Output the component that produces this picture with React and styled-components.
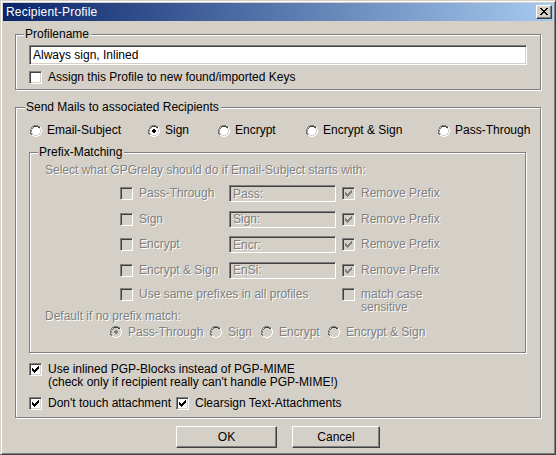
import React from "react";
import styled, { createGlobalStyle } from "styled-components";

const GlobalStyle = createGlobalStyle`
  html, body {
    margin: 0;
    padding: 0;
    background: #d4d0c8;
  }
  * {
    box-sizing: border-box;
  }
`;

const FONT = `"Liberation Sans", Arial, sans-serif`;

const Window = styled.div`
  width: 556px;
  height: 455px;
  background: #d4d0c8;
  border-top: 1px solid #d4d0c8;
  border-left: 1px solid #d4d0c8;
  border-right: 1px solid #404040;
  border-bottom: 1px solid #404040;
  box-shadow: inset 1px 1px 0 #ffffff, inset -1px -1px 0 #808080;
  padding: 2px;
  font-family: ${FONT};
  font-size: 12px;
  color: #000;
  display: flex;
  flex-direction: column;
`;

const TitleBar = styled.div`
  height: 18px;
  background: linear-gradient(to right, #0a246a, #a6caf0);
  display: flex;
  align-items: center;
  justify-content: space-between;
  padding: 0 1px 0 3px;
`;

const Title = styled.span`
  color: #fff;
  font-size: 12px;
  letter-spacing: 0.2px;
`;

const CloseButton = styled.div`
  width: 16px;
  height: 14px;
  background: #d4d0c8;
  border-top: 1px solid #fff;
  border-left: 1px solid #fff;
  border-right: 1px solid #404040;
  border-bottom: 1px solid #404040;
  box-shadow: inset -1px -1px 0 #808080;
  display: flex;
  align-items: center;
  justify-content: center;
  padding-bottom: 1px;
`;

const Body = styled.div`
  display: flex;
  flex-direction: column;
  padding: 13px 11px 0 12px;
`;

const Group = styled.div`
  position: relative;
  border: 1px solid #808080;
  box-shadow: inset 1px 1px 0 #fff, 1px 1px 0 #fff;
  margin-right: 1px;
  margin-bottom: 1px;
  display: flex;
  flex-direction: column;
  padding: ${(p) => p.$pad || "0"};
  height: ${(p) => p.$h}px;
`;

const Legend = styled.span`
  position: absolute;
  top: -7px;
  left: ${(p) => p.$left || 8}px;
  background: #d4d0c8;
  padding: 0 2px 0 1px;
  line-height: 13px;
  color: #000;
`;

const TextField = styled.div`
  height: 20px;
  background: ${(p) => (p.$disabled ? "#d4d0c8" : "#fff")};
  border-top: 1px solid #808080;
  border-left: 1px solid #808080;
  border-right: 1px solid #fff;
  border-bottom: 1px solid #fff;
  box-shadow: inset 1px 1px 0 #404040, inset -1px -1px 0 #d4d0c8;
  padding: 0 3px;
  display: flex;
  align-items: center;
  color: ${(p) => (p.$disabled ? "#808080" : "#000")};
  text-shadow: ${(p) => (p.$disabled ? "1px 1px 0 #fff" : "none")};
`;

const Row = styled.div`
  display: flex;
  align-items: ${(p) => p.$align || "center"};
  margin-top: ${(p) => p.$mt || 0}px;
  padding-left: ${(p) => p.$pl || 0}px;
`;

const Item = styled.label`
  display: flex;
  align-items: ${(p) => p.$align || "center"};
  width: ${(p) => (p.$w ? `${p.$w}px` : "auto")};
  flex: none;
  gap: ${(p) => p.$gap || 5}px;
`;

const Text = styled.span`
  line-height: 13px;
  white-space: pre;
  color: ${(p) => (p.$disabled ? "#808080" : "#000")};
  text-shadow: ${(p) => (p.$disabled ? "1px 1px 0 #fff" : "none")};
  margin-top: ${(p) => p.$mt || 0}px;
`;

const Box = styled.span`
  width: 13px;
  height: 13px;
  flex: none;
  background: ${(p) => (p.$disabled ? "#d4d0c8" : "#fff")};
  border-top: 1px solid #808080;
  border-left: 1px solid #808080;
  border-right: 1px solid #fff;
  border-bottom: 1px solid #fff;
  box-shadow: inset 1px 1px 0 #404040, inset -1px -1px 0 #d4d0c8;
  display: flex;
  align-items: center;
  justify-content: center;
`;

const PrefixGrid = styled.div`
  display: grid;
  grid-template-columns: 109px 107px 6px auto;
  grid-auto-rows: 17px;
  row-gap: 8.6px;
  align-items: center;
  margin-left: 75px;
  margin-top: 8px;
`;

const ButtonRow = styled.div`
  display: flex;
  gap: 15px;
  padding-left: 161px;
  margin-top: 7px;
`;

const Button = styled.div`
  width: ${(p) => p.$w}px;
  height: 22px;
  background: #d4d0c8;
  border-top: 1px solid #fff;
  border-left: 1px solid #fff;
  border-right: 1px solid #404040;
  border-bottom: 1px solid #404040;
  box-shadow: inset -1px -1px 0 #808080;
  display: flex;
  align-items: center;
  justify-content: center;
  padding-bottom: 1px;
`;

const Check = ({ checked, disabled }) => (
  <Box $disabled={disabled}>
    {checked && (
      <svg width="7" height="7" viewBox="0 0 7 7">
        <path
          d="M0 2h1v1h1v1h1V3h1V2h1V1h1V0h1v3h-1v1h-1v1h-1v1h-1v1H2V6H1V5H0z"
          fill={disabled ? "#808080" : "#000"}
        />
      </svg>
    )}
  </Box>
);

const Radio = ({ checked, disabled }) => (
  <svg width="12" height="12" viewBox="0 0 12 12" style={{ flex: "none" }}>
    <path d="M4 0h4v1h2v1h-2v-1h-4v1h-2v2h-1v4h1v2h-1v-2h-1v-4h1v-2h1v-1h1z" fill="#808080" />
    <path d="M4 1h4v1h2v1h-2v-1h-4v1h-2v2h-1v4h-1z" fill="#404040" />
    <path d="M10 2h1v2h1v4h-1v2h-1v1h-2v1h-4v-1h-2v-1h2v1h4v-1h2v-2h1v-4h-1z" fill="#fff" />
    <path d="M9 3h1v5h-1v1h-1v1h-4v-1h4v-1h1z" fill="#d4d0c8" />
    <path
      d="M4 2h4v1h1v1h1v4h-1v1h-1v1h-4v-1h-1v-1h-1v-4h1v-1h1z"
      fill={disabled ? "#d4d0c8" : "#fff"}
    />
    {checked && <path d="M5 4h2v1h1v2h-1v1h-2v-1h-1v-2h1z" fill={disabled ? "#808080" : "#000"} />}
  </svg>
);

const CheckItem = ({ label, checked, disabled, w, gap = 6, align }) => (
  <Item $w={w} $gap={gap} $align={align}>
    <Check checked={checked} disabled={disabled} />
    <Text $disabled={disabled}>{label}</Text>
  </Item>
);

const RadioItem = ({ label, checked, disabled, w, gap = 5 }) => (
  <Item $w={w} $gap={gap}>
    <Radio checked={checked} disabled={disabled} />
    <Text $disabled={disabled}>{label}</Text>
  </Item>
);

const prefixRows = [
  { label: "Pass-Through", prefix: "Pass:" },
  { label: "Sign", prefix: "Sign:" },
  { label: "Encrypt", prefix: "Encr:" },
  { label: "Encrypt & Sign", prefix: "EnSi:" },
];

const sendModes = [
  { label: "Email-Subject", w: 118 },
  { label: "Sign", w: 70, checked: true },
  { label: "Encrypt", w: 88 },
  { label: "Encrypt & Sign", w: 132 },
  { label: "Pass-Through" },
];

const defaultModes = [
  { label: "Pass-Through", w: 100, checked: true },
  { label: "Sign", w: 51 },
  { label: "Encrypt", w: 67 },
  { label: "Encrypt & Sign" },
];

export default function App() {
  return (
    <>
      <GlobalStyle />
      <Window>
        <TitleBar>
          <Title>Recipient-Profile</Title>
          <CloseButton>
            <svg width="8" height="7" viewBox="0 0 8 7">
              <path
                d="M0 0h2v1h1v1h2V1h1V0h2v1H7v1H6v1H5v1h1v1h1v1h1v1H6V6H5V5H3v1H2v1H0V6h1V5h1V4h1V3H2V2H1V1H0z"
                fill="#000"
              />
            </svg>
          </CloseButton>
        </TitleBar>
        <Body>
          <Group $h={56} $pad="10px 13px 0 13px">
            <Legend>Profilename</Legend>
            <TextField>Always sign, Inlined</TextField>
            <Row $mt={6}>
              <CheckItem label="Assign this Profile to new found/imported Keys" />
            </Row>
          </Group>

          <Group $h={311} $pad="0 13px 0 13px" style={{ marginTop: 16 }}>
            <Legend $left={9}>Send Mails to associated Recipients</Legend>
            <Row $mt={16} $pl={1}>
              {sendModes.map((m) => (
                <RadioItem key={m.label} {...m} />
              ))}
            </Row>
            <Group $h={201} $pad="0 0 0 15px" style={{ marginTop: 15 }}>
              <Legend $left={8}>Prefix-Matching</Legend>
              <Row $mt={11}>
                <Text $disabled>Select what GPGrelay should do if Email-Subject starts with:</Text>
              </Row>
              <PrefixGrid>
                {prefixRows.map((r) => (
                  <React.Fragment key={r.label}>
                    <CheckItem label={r.label} disabled />
                    <TextField $disabled style={{ height: 17 }}>
                      {r.prefix}
                    </TextField>
                    <span />
                    <CheckItem label="Remove Prefix" checked disabled />
                  </React.Fragment>
                ))}
              </PrefixGrid>
              <Row $mt={9} $pl={75} $align="flex-start">
                <CheckItem label="Use same prefixes in all profiles" disabled w={222} />
                <CheckItem label={"match case\nsensitive"} disabled align="flex-start" />
              </Row>
              <Row $mt={-4}>
                <Text $disabled>Default if no prefix match:</Text>
              </Row>
              <Row $mt={3} $pl={65}>
                {defaultModes.map((m) => (
                  <RadioItem key={m.label} {...m} disabled gap={6} />
                ))}
              </Row>
            </Group>
            <Row $mt={9} $align="flex-start">
              <CheckItem
                label={"Use inlined PGP-Blocks instead of PGP-MIME\n(check only if recipient really can't handle PGP-MIME!)"}
                checked
                align="flex-start"
              />
            </Row>
            <Row $mt={8}>
              <CheckItem label="Don't touch attachment" checked w={147} />
              <CheckItem label="Clearsign Text-Attachments" checked />
            </Row>
          </Group>

          <ButtonRow>
            <Button $w={101}>OK</Button>
            <Button $w={88}>Cancel</Button>
          </ButtonRow>
        </Body>
      </Window>
    </>
  );
}
